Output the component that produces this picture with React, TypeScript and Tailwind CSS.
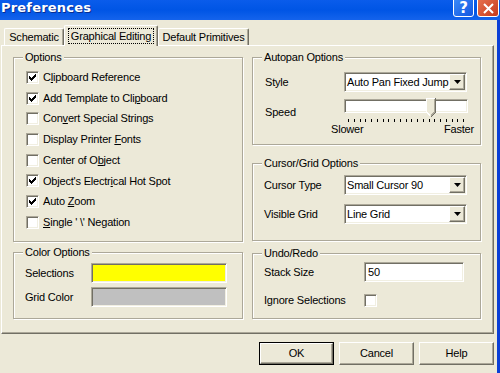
import React from "react";

// classic 3D frames
const raised =
  "border border-t-white border-l-white border-r-[#716F64] border-b-[#716F64] shadow-[inset_-1px_-1px_0_#ACA899]";
const sunken =
  "border border-t-[#ACA899] border-l-[#ACA899] border-r-white border-b-white shadow-[inset_1px_1px_0_#716F64,inset_-1px_-1px_0_#F1EFE2]";

function CheckBox({ checked }: { checked?: boolean }) {
  return (
    <span className={`w-[13px] h-[13px] shrink-0 bg-white flex items-center justify-center ${sunken}`}>
      {checked && (
        <svg width="7" height="7" viewBox="0 0 7 7" shapeRendering="crispEdges">
          <path d="M0 2 L2 4 L7 -1 L7 2 L2 7 L0 5 Z" fill="black" />
        </svg>
      )}
    </span>
  );
}

function Option({ checked, children }: { checked?: boolean; children: React.ReactNode }) {
  return (
    <div className="h-[20.7px] flex items-center gap-[4px]">
      <CheckBox checked={checked} />
      <span className="whitespace-nowrap">{children}</span>
    </div>
  );
}

function Group({ title, className, children }: { title: string; className: string; children: React.ReactNode }) {
  return (
    <div className={`relative border border-[#ACA899] shadow-[inset_1px_1px_0_#fff,1px_1px_0_#fff] ${className}`}>
      <span className="absolute left-[9px] top-[-8px] px-[2px] bg-[#ECE9D8] leading-[14px] whitespace-nowrap">
        {title}
      </span>
      {children}
    </div>
  );
}

function Select({ value }: { value: string }) {
  return (
    <div className={`h-[20px] w-[123px] bg-white flex items-center justify-between pl-[2px] pr-[1px] ${sunken}`}>
      <span className="whitespace-nowrap">{value}</span>
      <span className={`w-[16px] h-[16px] bg-[#ECE9D8] flex items-center justify-center ${raised}`}>
        <svg width="7" height="4" viewBox="0 0 7 4">
          <path d="M0 0 H7 L3.5 4 Z" fill="black" />
        </svg>
      </span>
    </div>
  );
}

function Button({ label, isDefault }: { label: string; isDefault?: boolean }) {
  const inner = (
    <div className={`w-full h-full flex items-center justify-center ${raised}`}>{label}</div>
  );
  return (
    <div className={`w-[75px] h-[23px] ${isDefault ? "border border-black" : ""}`}>{inner}</div>
  );
}

function Tab({ label, active }: { label: string; active?: boolean }) {
  if (active) {
    return (
      <div className="relative z-10 w-[94px] h-[21px] mb-[-1px] bg-[#ECE9D8] flex items-start justify-center pt-[2px] border-t border-l border-r border-t-white border-l-white border-r-[#716F64] rounded-t-[2px] shadow-[inset_-1px_0_0_#ACA899]">
        <span className="px-[2px] h-[16px] leading-[14px] border border-dotted border-black whitespace-nowrap">
          {label}
        </span>
      </div>
    );
  }
  return (
    <div className="h-[17px] flex items-center justify-center border-t border-l border-r border-t-white border-l-white border-r-[#716F64] rounded-t-[2px] shadow-[inset_-1px_0_0_#ACA899] whitespace-nowrap">
      {label}
    </div>
  );
}

export default function App() {
  return (
    <div className="w-[500px] h-[373px] flex flex-col bg-[#ECE9D8] text-black text-[11px] tracking-[-0.2px] overflow-hidden font-['Liberation_Sans',Arial,sans-serif]">
      {/* title bar */}
      <div className="h-[20px] flex items-start justify-between pl-[1px] pr-[1px] bg-gradient-to-b from-[#0A5CEB] via-[#0055E5] to-[#1463EC] overflow-hidden">
        <span className="text-white font-bold text-[13px] leading-[16px] tracking-[0.2px] font-['DejaVu_Sans',sans-serif] [text-shadow:1px_1px_0_#0A2D8F]">
          Preferences
        </span>
        <div className="flex gap-[3px] -mt-[4px]">
          <div className="w-[21px] h-[21px] rounded-[3px] border border-white bg-gradient-to-br from-[#3D8DF9] to-[#1555E0] flex items-center justify-center pt-[3px] text-white font-bold text-[15px] font-['DejaVu_Sans',sans-serif]">
            ?
          </div>
          <div className="w-[22px] h-[21px] rounded-[3px] border border-white bg-gradient-to-br from-[#E87452] to-[#C6381A] flex items-center justify-center pt-[3px]">
            <svg width="11" height="11" viewBox="0 0 11 11">
              <path d="M1 1 L10 10 M10 1 L1 10" stroke="white" strokeWidth="2" />
            </svg>
          </div>
        </div>
      </div>

      <div className="flex-1 flex">
        <div className="w-[497px] pt-[5px] pl-[1px] flex flex-col">
          {/* tabs */}
          <div className="flex items-end h-[20px] pl-[3px]">
            <div className="w-[60px]">
              <Tab label="Schematic" />
            </div>
            <Tab label="Graphical Editing" active />
            <div className="w-[91px]">
              <Tab label="Default Primitives" />
            </div>
          </div>

          {/* tab sheet */}
          <div className={`w-[493px] h-[289px] flex gap-[9px] pl-[11px] pt-[11px] ${raised}`}>
            <div className="w-[230px] flex flex-col">
              <Group title="Options" className="h-[185px] pt-[9px] pl-[12px] flex flex-col">
                <Option checked>
                  C<u>l</u>ipboard Reference
                </Option>
                <Option checked>
                  Add Template to Cli<u>p</u>board
                </Option>
                <Option>
                  Con<u>v</u>ert Special Strings
                </Option>
                <Option>
                  Display Printer <u>F</u>onts
                </Option>
                <Option>
                  Center of O<u>b</u>ject
                </Option>
                <Option checked>
                  Object's Electr<u>i</u>cal Hot Spot
                </Option>
                <Option checked>
                  Auto <u>Z</u>oom
                </Option>
                <Option>
                  <u>S</u>ingle ' \' Negation
                </Option>
              </Group>

              <Group title="Color Options" className="mt-[10px] h-[67px] pt-[10px] pl-[11px] flex flex-col gap-[4px]">
                <div className="h-[20px] flex items-center">
                  <span className="w-[66px]">Selections</span>
                  <div className={`w-[136px] h-[20px] bg-[#FFFF00] ${sunken}`} />
                </div>
                <div className="h-[20px] flex items-center">
                  <span className="w-[66px]">Grid Color</span>
                  <div className={`w-[136px] h-[20px] bg-[#C0C0C0] ${sunken}`} />
                </div>
              </Group>
            </div>

            <div className="w-[229px] flex flex-col">
              <Group title="Autopan Options" className="h-[88px] pt-[14px] pl-[12px] flex flex-col">
                <div className="h-[20px] flex items-center">
                  <span className="w-[79px]">Style</span>
                  <Select value="Auto Pan Fixed Jump" />
                </div>
                <div className="mt-[7px] flex">
                  <span className="w-[79px] mt-[6px] leading-[14px]">Speed</span>
                  <div className="w-[124px] flex flex-col">
                    <div className={`relative h-[14px] bg-white ${sunken}`}>
                      <svg
                        className="absolute left-[81px] top-[-2px]"
                        width="10"
                        height="20"
                        viewBox="0 0 10 20"
                        shapeRendering="crispEdges"
                      >
                        <path d="M0.5 0.5 H9 V14 L5 18.5 L0.5 14 Z" fill="#ECE9D8" />
                        <path d="M0.5 14 V0.5 H9" stroke="white" fill="none" />
                        <path d="M9.5 0 V14.5 L5 19" stroke="#716F64" fill="none" />
                        <path d="M8.5 1 V14 L5 17.5" stroke="#ACA899" fill="none" />
                        <path d="M0.5 14 L4 17.5" stroke="white" fill="none" />
                      </svg>
                    </div>
                    <div className="mt-[6px] px-[4px] h-[4px] flex justify-between">
                      {Array.from({ length: 21 }).map((_, i) => (
                        <span key={i} className="w-[1px] h-[3px] bg-black" />
                      ))}
                    </div>
                    <div className="-ml-[13px] -mr-[6px] flex justify-between leading-[12px]">
                      <span>Slower</span>
                      <span>Faster</span>
                    </div>
                  </div>
                </div>
              </Group>

              <Group title="Cursor/Grid Options" className="mt-[18px] h-[78px] pt-[11px] pl-[11px] flex flex-col gap-[9px]">
                <div className="h-[20px] flex items-center">
                  <span className="w-[80px]">Cursor Type</span>
                  <Select value="Small Cursor 90" />
                </div>
                <div className="h-[20px] flex items-center">
                  <span className="w-[80px]">Visible Grid</span>
                  <Select value="Line Grid" />
                </div>
              </Group>

              <Group title="Undo/Redo" className="mt-[12px] h-[66px] pt-[8px] pl-[11px] flex flex-col">
                <div className="h-[20px] flex items-center">
                  <span className="w-[100px]">Stack Size</span>
                  <div className={`w-[100px] h-[20px] bg-white flex items-center pl-[3px] ${sunken}`}>50</div>
                </div>
                <div className="mt-[12px] h-[13px] flex items-center">
                  <span className="w-[100px] whitespace-nowrap">Ignore Selections</span>
                  <CheckBox />
                </div>
              </Group>
            </div>
          </div>

          {/* dialog buttons */}
          <div className="w-[493px] mt-[8px] flex justify-end gap-[5px]">
            <Button label="OK" isDefault />
            <Button label="Cancel" />
            <Button label="Help" />
          </div>
        </div>
        <div className="w-[3px] bg-[#0B3FD6]" />
      </div>
    </div>
  );
}
